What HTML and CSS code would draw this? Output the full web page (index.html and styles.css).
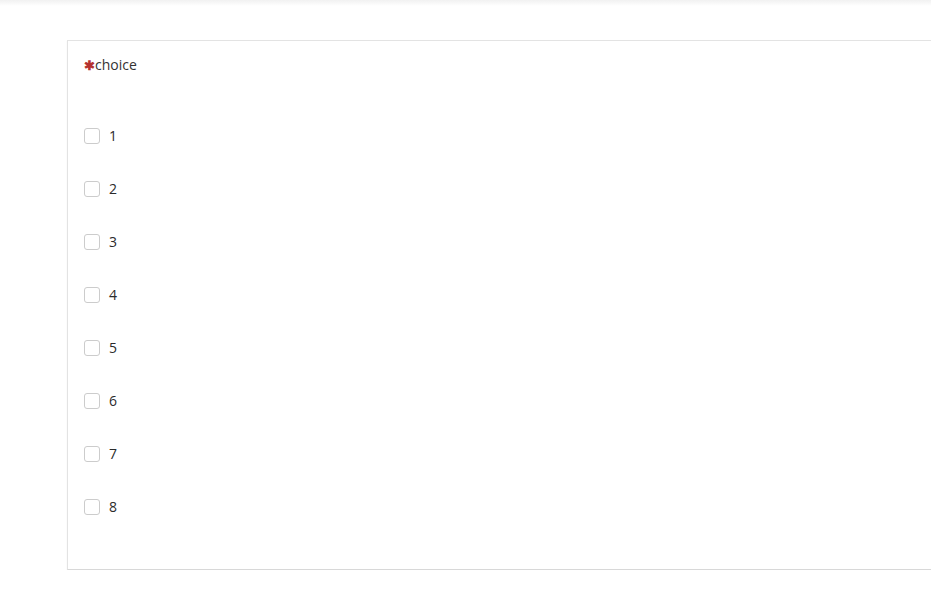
FILE: index.html
```html
<!DOCTYPE html>
<html>
<head>
<meta charset="utf-8">
<link rel="stylesheet" href="styles.css">
</head>
<body>
<div class="topbar"></div>
<main class="page">
  <section class="card">
    <div class="title"><span class="req">✱</span>choice</div>
    <ul class="options">
      <li class="option"><span class="box"></span><span class="label">1</span></li>
      <li class="option"><span class="box"></span><span class="label">2</span></li>
      <li class="option"><span class="box"></span><span class="label">3</span></li>
      <li class="option"><span class="box"></span><span class="label">4</span></li>
      <li class="option"><span class="box"></span><span class="label">5</span></li>
      <li class="option"><span class="box"></span><span class="label">6</span></li>
      <li class="option"><span class="box"></span><span class="label">7</span></li>
      <li class="option"><span class="box"></span><span class="label">8</span></li>
    </ul>
  </section>
</main>
</body>
</html>
```
FILE: styles.css
```css
html, body {
  margin: 0;
  padding: 0;
  background: #fff;
  overflow: hidden;
  font-family: "Open Sans", "Liberation Sans", sans-serif;
  font-size: 14px;
  color: #333;
}
.topbar {
  height: 6px;
  background: linear-gradient(to bottom, #f1f1f1, #ffffff);
}
.page {
  padding: 34px 0 0 67px;
}
.card {
  border: 1px solid #e3e3e3;
  border-right: none;
  border-bottom: 1px solid #d8d8d8;
  box-shadow: 0 1px 1px rgba(0,0,0,0.08);
  margin-right: -20px;
  padding: 14px 16px 52px 16px;
}
.title {
  line-height: 20px;
  height: 20px;
}
.req {
  color: #b5322f;
  font-size: 13px;
  font-weight: bold;
}
.options {
  list-style: none;
  margin: 51px 0 0 0;
  padding: 0;
  display: flex;
  flex-direction: column;
  gap: 33px;
}
.option {
  display: flex;
  align-items: center;
  height: 20px;
  gap: 9px;
}
.box {
  width: 14px;
  height: 14px;
  border: 1px solid #cccccc;
  border-radius: 3px;
  background: #fff;
}
.label {
  line-height: 20px;
  color: #2b2b2b;
}
```
